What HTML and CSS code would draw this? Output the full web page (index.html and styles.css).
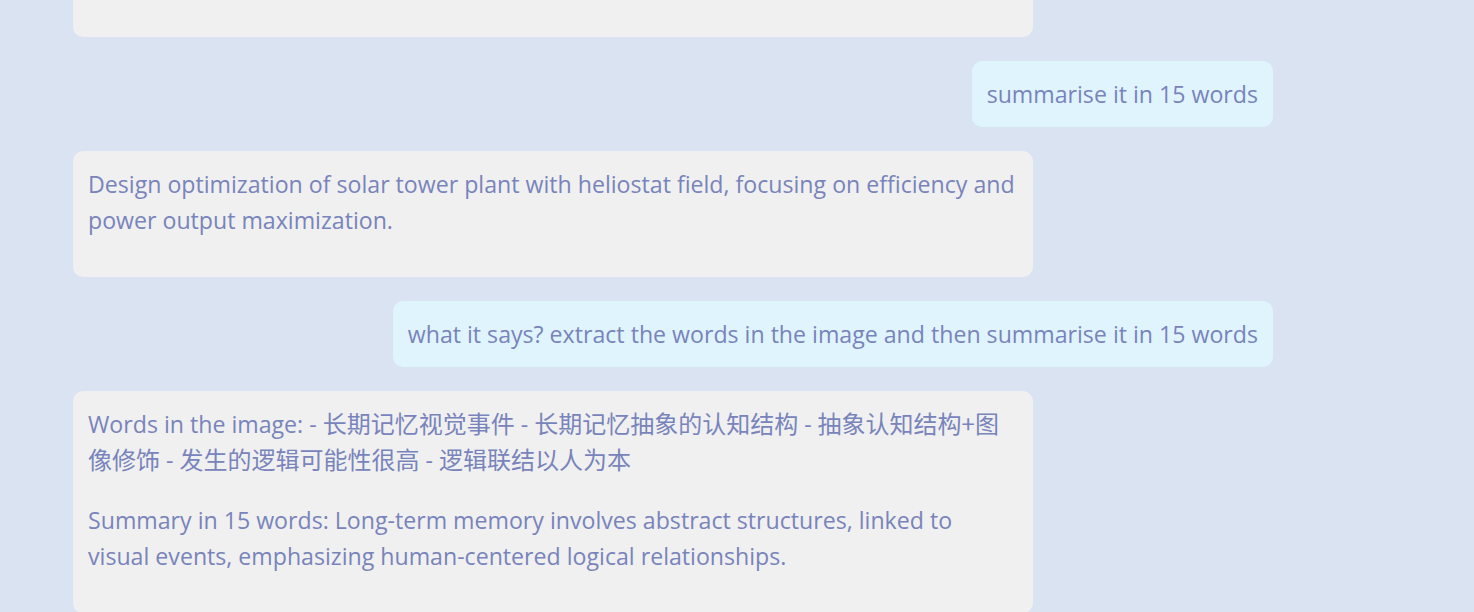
FILE: index.html
```html
<!DOCTYPE html>
<html lang="en">
<head>
<meta charset="utf-8">
<title>Chat</title>
<link rel="stylesheet" href="styles.css">
</head>
<body>
<main class="chat">
  <div class="msg bot partial"></div>
  <div class="msg user"><p>summarise it in 15 words</p></div>
  <div class="msg bot"><p>Design optimization of solar tower plant with heliostat field, focusing on efficiency and power output maximization.</p></div>
  <div class="msg user"><p>what it says? extract the words in the image and then summarise it in 15 words</p></div>
  <div class="msg bot">
    <p>Words in the image: - <span class="zh" lang="zh">长期记忆视觉事件</span> - <span class="zh" lang="zh">长期记忆抽象的认知结构</span> - <span class="zh" lang="zh">抽象认知结构+图</span><span class="zh" lang="zh">像修饰</span> - <span class="zh" lang="zh">发生的逻辑可能性很高</span> - <span class="zh" lang="zh">逻辑联结以人为本</span></p>
    <p>Summary in 15 words: Long-term memory involves abstract structures, linked to visual events, emphasizing human-centered logical relationships.</p>
  </div>
</main>
</body>
</html>
```
FILE: styles.css
```css
html, body {
  margin: 0;
  padding: 0;
  background: #dae3f1;
  height: 100%;
  overflow: hidden;
}
.chat {
  width: 1200px;
  margin-left: 73px;
  display: flex;
  flex-direction: column;
  gap: 24px;
  font-family: "Open Sans", "Noto Sans CJK SC", sans-serif;
  font-size: 23.15px;
  line-height: 36px;
  color: #7884bb;
}
.zh {
  font-family: "Noto Sans CJK SC", sans-serif;
  font-size: 24px;
  line-height: 1;
}
.msg {
  box-sizing: border-box;
  padding: 15px;
  border-radius: 10px;
}
.msg p {
  margin: 0;
}
.bot {
  align-self: flex-start;
  width: 960px;
  background: #f0f0f0;
}
.bot p {
  margin-bottom: 24px;
}
.user {
  align-self: flex-end;
  max-width: 960px;
  background: #e0f4fe;
}
.partial {
  height: 37px;
  padding: 0;
  border-radius: 0 0 10px 10px;
}
```
